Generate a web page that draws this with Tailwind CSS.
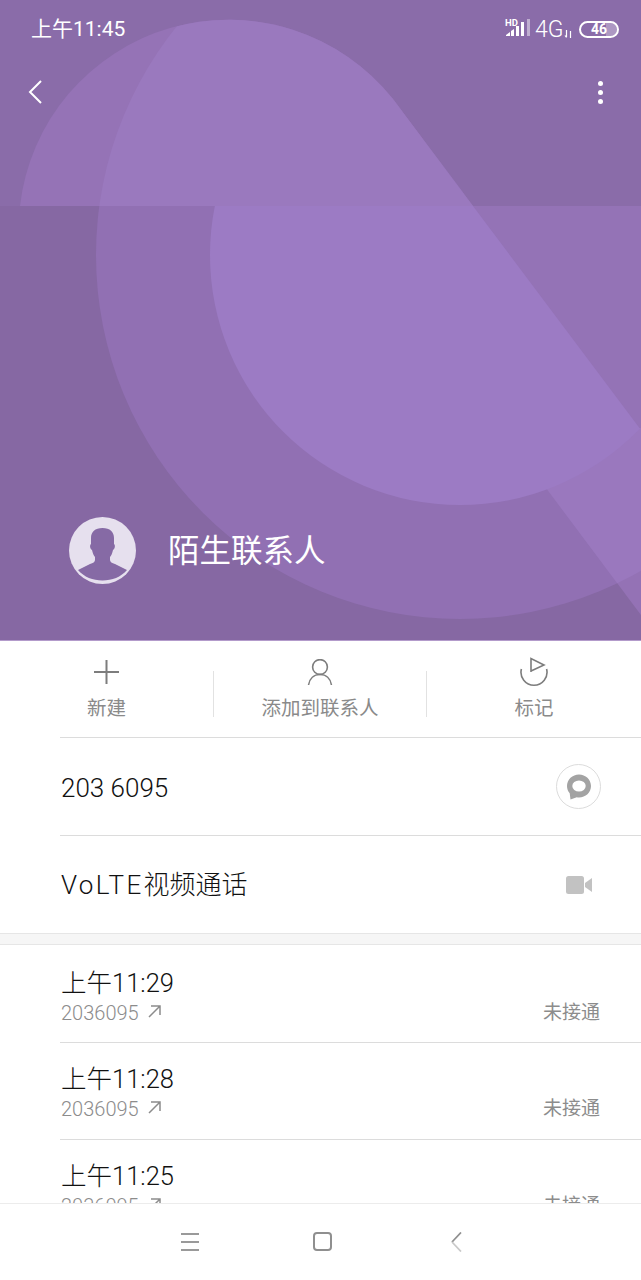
<!DOCTYPE html>
<html lang="en">
<head>
    <meta charset="utf-8">
    <title>Contact</title>
    <script src="https://cdn.jsdelivr.net/npm/@tailwindcss/browser@4"></script>
</head>
<body class="w-[641px] h-[1280px] overflow-hidden bg-white font-['Roboto','Noto_Sans_CJK_SC',sans-serif]">
    <div class="relative w-[641px] h-[1280px] overflow-hidden flex flex-col">

        <!-- purple header -->
        <header class="relative h-[641px] shrink-0 overflow-hidden bg-[#8a6ca9] text-white">
            <svg class="absolute inset-0" width="641" height="641" viewBox="0 0 641 641">
                <defs>
                    <clipPath id="big"><circle cx="460" cy="255" r="364"/></clipPath>
                    <clipPath id="under"><rect x="0" y="206" width="641" height="435"/></clipPath>
                    <clipPath id="leftOfDiagonal"><path d="M0 206H473L641 430V641H0Z"/></clipPath>
                </defs>
                <rect y="206" width="641" height="435" fill="#8668a3"/>
                <!-- ring below the fold line -->
                <circle cx="460" cy="255" r="364" fill="#9170b3" clip-path="url(#under)"/>
                <path d="M473 206 641 430V206Z" fill="#9473b6"/>
                <!-- rounded top shape -->
                <path d="M20 206A210 210 0 0 1 393 99L473 206Z" fill="#9573b6"/>
                <g clip-path="url(#big)">
                    <path d="M20 206A210 210 0 0 1 393 99L473 206Z" fill="#9a79be"/>
                </g>
                <!-- band at the lower right -->
                <path d="M546 488 641 615V428H600Z" fill="#9472b5"/>
                <g clip-path="url(#big)">
                    <path d="M546 488 641 615V428H600Z" fill="#9a78be"/>
                </g>
                <!-- inner circle -->
                <g clip-path="url(#leftOfDiagonal)">
                    <circle cx="460" cy="255" r="250" fill="#9c7bc4"/>
                </g>
                <rect y="640" width="641" height="1" fill="#b39bcb"/>
            </svg>

            <div class="relative flex items-center justify-between h-[58px] pl-[31px] pr-[22px]">
                <span class="text-[21px] leading-none mt-[1px]">上午11:45</span>
                <div class="flex items-center">
                    <svg class="mt-[-4px]" width="26" height="24" viewBox="0 0 26 24" fill="#fff">
                        <text x="0" y="10.500" font-size="9.500" font-weight="700" font-family="Roboto">HD</text>
                        <path d="M1 21h4v-4l-4 3ZM6 21h3v-7l-3 2ZM11 21h3V11h-3ZM16 21h3V7h-3Z"/>
                        <path d="M22 21h3V4h-3Z" opacity=".45"/>
                    </svg>
                    <span class="ml-[4px] w-[28px] text-[23px] font-light leading-none">4G</span>
                    <svg class="ml-[1px] mt-[9px]" width="9" height="10" viewBox="0 0 9 10" fill="none" stroke="#fff" stroke-width="1.200"><path d="M2.500 1v7M1 6.500l1.500 2M6.500 9V2"/></svg>
                    <div class="relative ml-[6px] w-[40px] h-[17px] rounded-full border-2 border-white overflow-hidden flex items-center justify-center">
                        <span class="absolute right-0 top-0 h-full w-[11px] bg-white/30"></span>
                        <span class="relative text-[14px] font-bold leading-none">46</span>
                    </div>
                </div>
            </div>

            <div class="relative flex items-center justify-between h-[38px] pl-[27px] pr-[38px] mt-[15px]">
                <svg width="16" height="26" viewBox="0 0 16 26" fill="none" stroke="#fff" stroke-width="2"><path d="M14 2 3 13l11 11"/></svg>
                <div class="flex flex-col gap-[4px]">
                    <span class="w-[5px] h-[5px] rounded-full bg-white"></span>
                    <span class="w-[5px] h-[5px] rounded-full bg-white"></span>
                    <span class="w-[5px] h-[5px] rounded-full bg-white"></span>
                </div>
            </div>

            <div class="absolute left-[69px] top-[517px] flex items-center gap-[32px]">
                <svg width="67" height="67" viewBox="0 0 67 67">
                    <circle cx="33.500" cy="33.500" r="33.500" fill="#e6e0ee"/>
                    <path d="M33.500 11C26 11 22 15 22 21L22 27C20.500 28 21 32 23 33C24 37 25 39 26 40L26 43C26 45 24 46 21 47L9 53C15 60 24 63.500 33.500 63.500C43 63.500 52 60 58 53L46 47C43 46 41 45 41 43L41 40C42 39 43 37 44 33C46 32 46.500 28 45 27L45 21C45 15 41 11 33.500 11Z" fill="#866aa5"/>
                </svg>
                <h1 class="text-[31.500px] leading-none font-normal mt-[2px]">陌生联系人</h1>
            </div>
        </header>

        <!-- actions -->
        <div class="flex items-start h-[96px] shrink-0 text-[#8a8a8a]">
            <div class="w-[213px] flex flex-col items-center pt-[17px]">
                <svg width="25" height="26" viewBox="0 0 25 26" fill="none" stroke="#7d7d7d" stroke-width="2"><path d="M12.500 2v24M0 14h25"/></svg>
                <span class="mt-[15px] text-[19.500px] leading-[20px]">新建</span>
            </div>
            <div class="w-px h-[46px] mt-[30px] bg-[#e2e2e2]"></div>
            <div class="w-[212px] flex flex-col items-center pt-[18px]">
                <svg width="26" height="26" viewBox="0 0 26 26" fill="none" stroke="#7d7d7d" stroke-width="1.600"><circle cx="13" cy="8" r="7.400"/><path d="M1.500 26C2.500 19.500 7 15.500 13 15.500s10.500 4 11.500 10.500"/></svg>
                <span class="mt-[14px] text-[19.500px] leading-[20px]">添加到联系人</span>
            </div>
            <div class="w-px h-[46px] mt-[30px] bg-[#e2e2e2]"></div>
            <div class="flex-1 flex flex-col items-center pt-[16px]">
                <svg width="30" height="30" viewBox="0 0 30 30" fill="none" stroke="#7d7d7d" stroke-width="1.600"><path d="M12 15V1.500L25 8l-13 6"/><path d="M2.400 12A13 13 0 1 0 27.600 12"/></svg>
                <span class="mt-[12px] text-[19.500px] leading-[20px]">标记</span>
            </div>
        </div>

        <!-- number rows -->
        <div class="ml-[60px] border-t border-[#dcdcdc] h-[98px] shrink-0 flex items-center justify-between pl-[1px] pr-[40px]">
            <span class="text-[26px] font-light text-[#111] mt-[4px]">203 6095</span>
            <div class="w-[45px] h-[45px] rounded-full border border-[#dcdcdc] flex items-center justify-center">
                <svg width="26" height="26" viewBox="0 0 26 26"><path d="M13 .5C6.400.5 1 5.600 1 12c0 2.800 1 5.300 2.700 7.300L4.500 25.500l6.300-2.200c.7.1 1.500.2 2.200.2 6.600 0 12-5.100 12-11.500S19.600.5 13 .5Z" fill="#a3a3a3"/><ellipse cx="13" cy="12" rx="6.700" ry="5.500" fill="#fff"/></svg>
            </div>
        </div>
        <div class="ml-[60px] border-t border-[#dcdcdc] h-[98px] shrink-0 flex items-center justify-between pl-[1px] pr-[49px]">
            <span class="text-[26px] font-light text-[#111] mt-[2px]"><span class="tracking-[2.400px]">VoLTE</span>视频通话</span>
            <svg width="26" height="18" viewBox="0 0 26 18" fill="#c2c2c2"><rect width="18" height="18" rx="2.500"/><path d="M19 7l7-5v14l-7-5Z"/></svg>
        </div>

        <div class="h-[12px] shrink-0 bg-[#f6f6f6] border-y border-[#e6e6e6]"></div>

        <!-- call log -->
        <div class="ml-[60px] h-[97px] shrink-0 pt-[19px] pl-[1px] pr-[41px]">
            <div class="text-[25.500px] font-light leading-[38px] text-[#111]">上午11:29</div>
            <div class="flex items-center justify-between text-[#8c8c8c] mt-[-2px]">
                <span class="flex items-center gap-[9px] text-[20px] font-light leading-[26px]">2036095
                    <svg class="mt-[-4px]" width="13" height="13" viewBox="0 0 13 13" fill="none" stroke="#8c8c8c" stroke-width="1.500"><path d="M1 12 12 1M3 1h9v9"/></svg>
                </span>
                <span class="text-[19px] leading-[26px]">未接通</span>
            </div>
        </div>
        <div class="ml-[60px] h-[97px] shrink-0 pt-[17px] pl-[1px] pr-[41px] border-t border-[#dcdcdc]">
            <div class="text-[25.500px] font-light leading-[38px] text-[#111]">上午11:28</div>
            <div class="flex items-center justify-between text-[#8c8c8c] mt-[-2px]">
                <span class="flex items-center gap-[9px] text-[20px] font-light leading-[26px]">2036095
                    <svg class="mt-[-4px]" width="13" height="13" viewBox="0 0 13 13" fill="none" stroke="#8c8c8c" stroke-width="1.500"><path d="M1 12 12 1M3 1h9v9"/></svg>
                </span>
                <span class="text-[19px] leading-[26px]">未接通</span>
            </div>
        </div>
        <div class="ml-[60px] h-[97px] shrink-0 pt-[17px] pl-[1px] pr-[41px] border-t border-[#dcdcdc]">
            <div class="text-[25.500px] font-light leading-[38px] text-[#111]">上午11:25</div>
            <div class="flex items-center justify-between text-[#8c8c8c] mt-[-2px]">
                <span class="flex items-center gap-[9px] text-[20px] font-light leading-[26px]">2036095
                    <svg class="mt-[-4px]" width="13" height="13" viewBox="0 0 13 13" fill="none" stroke="#8c8c8c" stroke-width="1.500"><path d="M1 12 12 1M3 1h9v9"/></svg>
                </span>
                <span class="text-[19px] leading-[26px]">未接通</span>
            </div>
        </div>

        <!-- nav bar lies over the list -->
        <nav class="absolute left-0 bottom-0 w-full h-[77px] bg-white border-t border-[#ececec] flex items-start pt-[27px]">
            <div class="ml-[181px] flex flex-col gap-[6px] mt-[2px]">
                <span class="w-[18px] h-[2px] bg-[#9a9a9a]"></span>
                <span class="w-[18px] h-[2px] bg-[#9a9a9a]"></span>
                <span class="w-[18px] h-[2px] bg-[#9a9a9a]"></span>
            </div>
            <div class="ml-[114px] mt-[1px] w-[19px] h-[19px] rounded-[4px] border-2 border-[#8f8f8f]"></div>
            <svg class="ml-[117px] mt-[1px]" width="14" height="20" viewBox="0 0 14 20" fill="none" stroke-width="1.800"><path d="M12 .5 3 10" stroke="#8f8f8f"/><path d="M3 10l9 9.500" stroke="#c9c9c9"/></svg>
        </nav>
    </div>
</body>
</html>
